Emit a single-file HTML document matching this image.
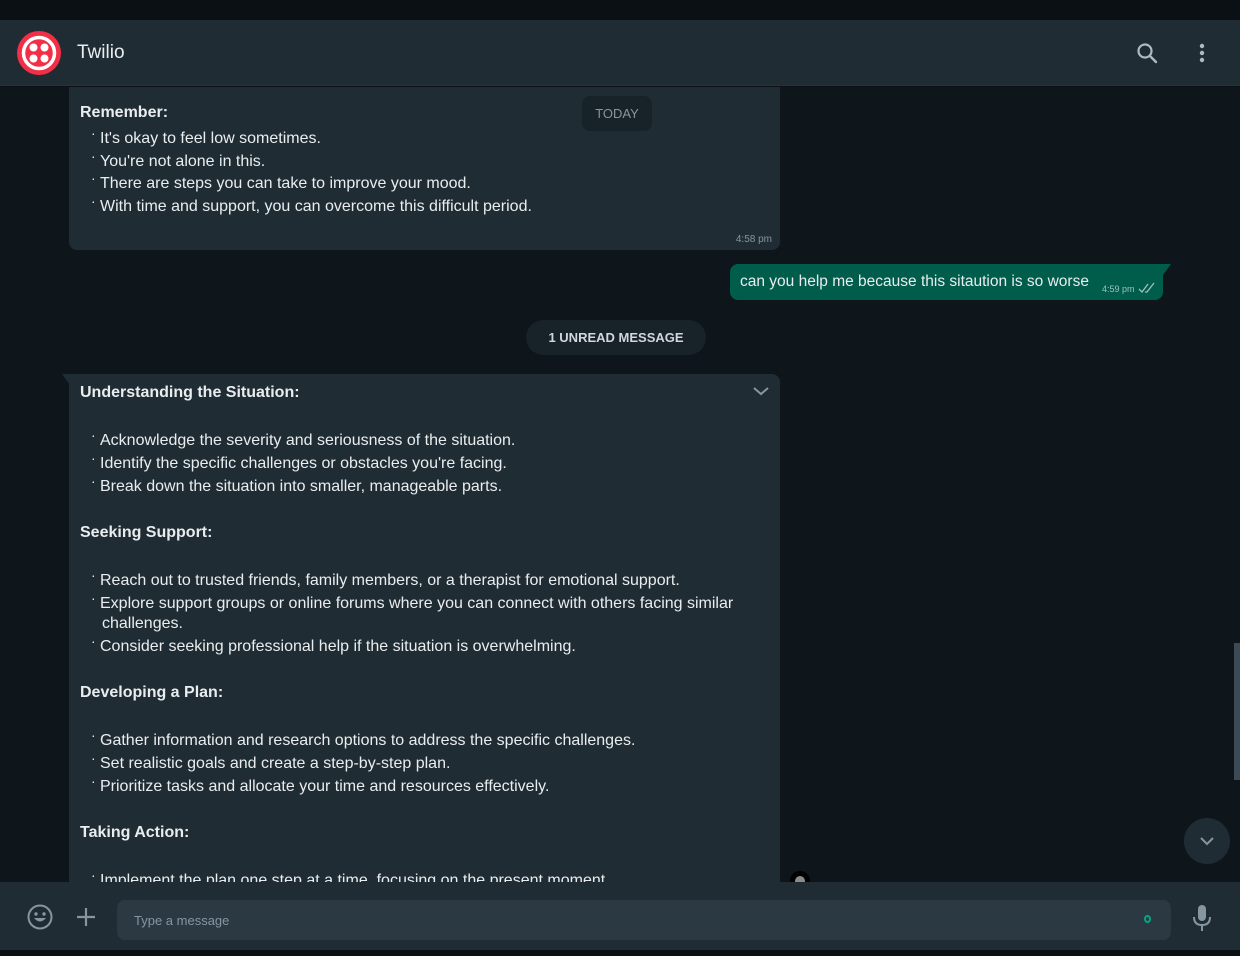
<!DOCTYPE html>
<html><head><meta charset="utf-8"><style>
*{margin:0;padding:0;box-sizing:border-box}
body{width:1240px;height:956px;background:#0b1014;font-family:"Liberation Sans","DejaVu Sans",sans-serif;color:#e9edef;position:relative;overflow:hidden}
.top{position:absolute;left:0;top:0;width:1240px;height:20px;background:#0b1014}
.hdr{position:absolute;left:0;top:20px;width:1240px;height:66px;background:#202c33;border-bottom:1px solid #2a3339}
.chat{position:absolute;left:0;top:87px;width:1240px;height:795px;background:#0e161b;overflow:hidden}
.bub{position:absolute;background:#202c33;border-radius:8px}
.b{font-weight:bold;font-size:16px;position:absolute;left:11px}
.li{position:absolute;left:31px;font-size:16px;white-space:nowrap}
.li:before{content:"·";position:absolute;left:-9px;top:-5px;font-size:14px}
.nb:before{content:none}
.ftr{position:absolute;left:0;top:882px;width:1240px;height:68px;background:#202c33}
.bot{position:absolute;left:0;top:950px;width:1240px;height:6px;background:#0b1014}
</style></head><body>
<div class="top"></div>
<div class="hdr">
 <svg style="position:absolute;left:17px;top:11px" width="44" height="44" viewBox="0 0 44 44"><circle cx="22" cy="22" r="22" fill="#f22f46"/><circle cx="22" cy="22" r="15.5" fill="none" stroke="#fff" stroke-width="3.5"/><circle cx="16.5" cy="16.5" r="4" fill="#fff"/><circle cx="27.5" cy="16.5" r="4" fill="#fff"/><circle cx="16.5" cy="27.5" r="4" fill="#fff"/><circle cx="27.5" cy="27.5" r="4" fill="#fff"/></svg>
 <div style="position:absolute;left:77px;top:22px;font-size:19px;color:#e9edef">Twilio</div>
 <svg style="position:absolute;left:1136px;top:22px" width="22" height="22" viewBox="0 0 22 22"><circle cx="9" cy="9" r="6.5" fill="none" stroke="#aebac1" stroke-width="2.2"/><path d="M13.8 13.8 L20 20" stroke="#aebac1" stroke-width="2.4" stroke-linecap="round"/></svg>
 <svg style="position:absolute;left:1197px;top:23px" width="10" height="22" viewBox="0 0 10 22"><circle cx="5" cy="3" r="2.2" fill="#aebac1"/><circle cx="5" cy="10" r="2.2" fill="#aebac1"/><circle cx="5" cy="17" r="2.2" fill="#aebac1"/></svg>
</div>
<div class="chat">
 <div class="bub" style="left:69px;top:-10px;width:711px;height:173px;border-radius:0 0 8px 8px">
  <div class="b" style="top:27px">Remember:</div>
  <div class="li" style="top:53px">It's okay to feel low sometimes.</div>
  <div class="li" style="top:76px">You're not alone in this.</div>
  <div class="li" style="top:98px">There are steps you can take to improve your mood.</div>
  <div class="li" style="top:121px">With time and support, you can overcome this difficult period.</div>
  <div style="position:absolute;right:8px;top:157px;font-size:10px;color:#8696a0">4:58 pm</div>
 </div>
 <div style="position:absolute;left:582px;top:9px;width:70px;height:35px;background:#182229;border-radius:8px;color:#8696a0;font-size:13px;text-align:center;line-height:35px">TODAY</div>
 <div style="position:absolute;left:730px;top:177px;width:433px;height:36px;background:#005c4b;border-radius:8px 0 8px 8px">
  <div style="position:absolute;left:10px;top:9px;font-size:15.5px;white-space:nowrap">can you help me because this sitaution is so worse</div>
  <div style="position:absolute;left:372px;top:20px;font-size:9px;color:#9fc3bb">4:59 pm</div>
  <svg style="position:absolute;left:408px;top:18px" width="18" height="12" viewBox="0 0 18 12"><path d="M1 7 L4 10 L10 2 M7 10 L9 10 L16 1" fill="none" stroke="#9fc3bb" stroke-width="1.3"/></svg>
 </div>
 <div style="position:absolute;left:1163px;top:177px;width:0;height:0;border-top:11px solid #005c4b;border-right:8px solid transparent"></div>
 <div style="position:absolute;left:526px;top:233px;width:180px;height:35px;background:#182229;border-radius:18px;color:#d1d7db;font-size:13px;font-weight:bold;text-align:center;line-height:35px">1 UNREAD MESSAGE</div>
 <div style="position:absolute;left:62px;top:287px;width:0;height:0;border-top:11px solid #202c33;border-left:8px solid transparent"></div>
 <div class="bub" style="left:69px;top:287px;width:711px;height:560px;border-radius:0 8px 8px 8px">
  <svg style="position:absolute;left:683px;top:12px" width="18" height="10" viewBox="0 0 18 10"><path d="M2 2 L9 8 L16 2" fill="none" stroke="#8696a0" stroke-width="2"/></svg>
  <div class="b" style="top:10px">Understanding the Situation:</div>
  <div class="li" style="top:58px">Acknowledge the severity and seriousness of the situation.</div>
  <div class="li" style="top:81px">Identify the specific challenges or obstacles you're facing.</div>
  <div class="li" style="top:104px">Break down the situation into smaller, manageable parts.</div>
  <div class="b" style="top:150px">Seeking Support:</div>
  <div class="li" style="top:198px">Reach out to trusted friends, family members, or a therapist for emotional support.</div>
  <div class="li" style="top:221px">Explore support groups or online forums where you can connect with others facing similar</div>
  <div class="li nb" style="top:241px;left:33px">challenges.</div>
  <div class="li" style="top:264px">Consider seeking professional help if the situation is overwhelming.</div>
  <div class="b" style="top:310px">Developing a Plan:</div>
  <div class="li" style="top:358px">Gather information and research options to address the specific challenges.</div>
  <div class="li" style="top:381px">Set realistic goals and create a step-by-step plan.</div>
  <div class="li" style="top:404px">Prioritize tasks and allocate your time and resources effectively.</div>
  <div class="b" style="top:450px">Taking Action:</div>
  <div class="li" style="top:498px">Implement the plan one step at a time, focusing on the present moment.</div>
 </div>
 <div style="position:absolute;left:1184px;top:731px;width:46px;height:46px;border-radius:50%;background:#202c33"><svg style="position:absolute;left:15px;top:18px" width="16" height="10" viewBox="0 0 16 10"><path d="M2 2 L8 8 L14 2" fill="none" stroke="#8696a0" stroke-width="2"/></svg></div>
 <div style="position:absolute;left:1234px;top:556px;width:6px;height:137px;background:#3b4a54"></div>
 <div style="position:absolute;left:790px;top:784px;width:20px;height:20px;border-radius:50%;background:#000"><div style="position:absolute;left:5px;top:5px;width:10px;height:10px;border-radius:50%;background:#8a8a8a"></div></div>
</div>
<div class="ftr">
 <svg style="position:absolute;left:27px;top:22px" width="26" height="26" viewBox="0 0 26 26"><circle cx="13" cy="13" r="11.5" fill="none" stroke="#8696a0" stroke-width="2"/><circle cx="9" cy="10" r="1.7" fill="#8696a0"/><circle cx="17" cy="10" r="1.7" fill="#8696a0"/><path d="M7 14 Q13 21 19 14 Z" fill="#8696a0"/></svg>
 <svg style="position:absolute;left:76px;top:25px" width="20" height="20" viewBox="0 0 20 20"><path d="M10 1 V19 M1 10 H19" stroke="#8696a0" stroke-width="2.2"/></svg>
 <div style="position:absolute;left:117px;top:18px;width:1054px;height:40px;background:#2a3942;border-radius:8px">
  <div style="position:absolute;left:17px;top:13px;font-size:13px;color:#8696a0">Type a message</div>
  <div style="position:absolute;left:1027px;top:15px;width:7px;height:8px;border:2px solid #00a884;border-radius:50%"></div>
 </div>
 <svg style="position:absolute;left:1192px;top:22px" width="20" height="28" viewBox="0 0 20 28"><rect x="6" y="1" width="8" height="16" rx="4" fill="#8696a0"/><path d="M2 13 Q2 21 10 21 Q18 21 18 13 M10 21 V27" fill="none" stroke="#8696a0" stroke-width="2"/></svg>
</div>
<div class="bot"></div>
</body></html>
